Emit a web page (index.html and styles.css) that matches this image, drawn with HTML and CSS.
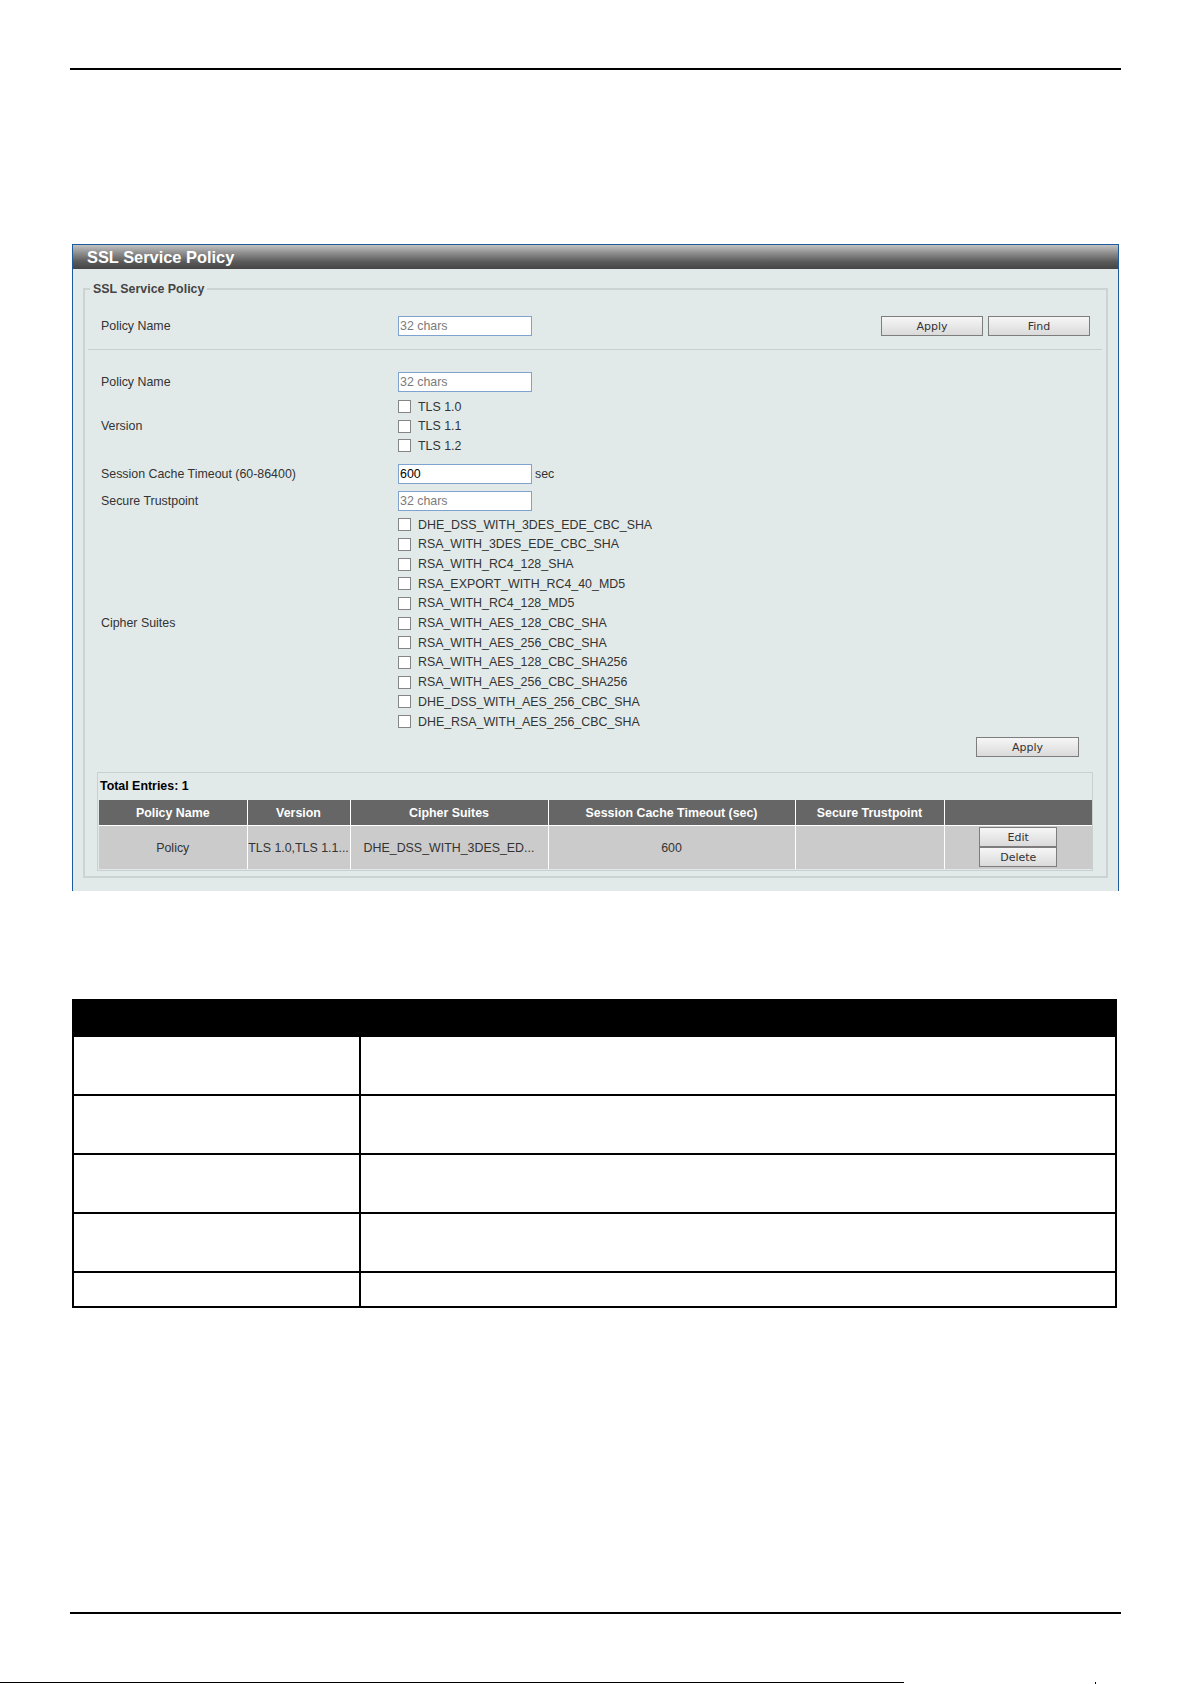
FILE: index.html
```html
<!DOCTYPE html>
<html lang="en">
<head>
    <meta charset="UTF-8">
    <meta name="viewport" content="width=device-width, initial-scale=1.0">
    <title>SSL Service Policy</title>
    <link rel="stylesheet" href="styles.css">
</head>
<body>

<div class="page">
    <div class="rule rule-top"></div>

    <div class="panel">
        <div class="panel-title">SSL Service Policy</div>
        <div class="panel-body">
            <fieldset class="group">
                <legend>SSL Service Policy</legend>

                <div class="row row-find">
                    <span class="lbl">Policy Name</span>
                    <input type="text" class="txt" placeholder="32 chars">
                    <div class="btns">
                        <button class="btn btn-wide">Apply</button>
                        <button class="btn btn-wide">Find</button>
                    </div>
                </div>

                <div class="sep"></div>

                <div class="row row-policy">
                    <span class="lbl">Policy Name</span>
                    <input type="text" class="txt" placeholder="32 chars">
                </div>

                <div class="row row-version">
                    <span class="lbl">Version</span>
                    <div class="checks">
                        <label class="chk"><span class="box"></span>TLS 1.0</label>
                        <label class="chk"><span class="box"></span>TLS 1.1</label>
                        <label class="chk"><span class="box"></span>TLS 1.2</label>
                    </div>
                </div>

                <div class="row row-session">
                    <span class="lbl">Session Cache Timeout (60-86400)</span>
                    <input type="text" class="txt" value="600">
                    <span class="unit">sec</span>
                </div>

                <div class="row row-trust">
                    <span class="lbl">Secure Trustpoint</span>
                    <input type="text" class="txt" placeholder="32 chars">
                </div>

                <div class="row row-cipher">
                    <span class="lbl">Cipher Suites</span>
                    <div class="checks">
                        <label class="chk"><span class="box"></span>DHE_DSS_WITH_3DES_EDE_CBC_SHA</label>
                        <label class="chk"><span class="box"></span>RSA_WITH_3DES_EDE_CBC_SHA</label>
                        <label class="chk"><span class="box"></span>RSA_WITH_RC4_128_SHA</label>
                        <label class="chk"><span class="box"></span>RSA_EXPORT_WITH_RC4_40_MD5</label>
                        <label class="chk"><span class="box"></span>RSA_WITH_RC4_128_MD5</label>
                        <label class="chk"><span class="box"></span>RSA_WITH_AES_128_CBC_SHA</label>
                        <label class="chk"><span class="box"></span>RSA_WITH_AES_256_CBC_SHA</label>
                        <label class="chk"><span class="box"></span>RSA_WITH_AES_128_CBC_SHA256</label>
                        <label class="chk"><span class="box"></span>RSA_WITH_AES_256_CBC_SHA256</label>
                        <label class="chk"><span class="box"></span>DHE_DSS_WITH_AES_256_CBC_SHA</label>
                        <label class="chk"><span class="box"></span>DHE_RSA_WITH_AES_256_CBC_SHA</label>
                    </div>
                </div>

                <div class="row-apply">
                    <button class="btn btn-apply">Apply</button>
                </div>

                <div class="entries">
                    <div class="total">Total Entries: 1</div>
                    <table class="list">
                        <colgroup>
                            <col style="width:148px">
                            <col style="width:103px">
                            <col style="width:198px">
                            <col style="width:247px">
                            <col style="width:149px">
                            <col style="width:148px">
                        </colgroup>
                        <tr>
                            <th>Policy Name</th>
                            <th>Version</th>
                            <th>Cipher Suites</th>
                            <th>Session Cache Timeout (sec)</th>
                            <th>Secure Trustpoint</th>
                            <th></th>
                        </tr>
                        <tr>
                            <td>Policy</td>
                            <td>TLS 1.0,TLS 1.1...</td>
                            <td>DHE_DSS_WITH_3DES_ED...</td>
                            <td>600</td>
                            <td></td>
                            <td class="actions">
                                <button class="btn btn-small">Edit</button>
                                <button class="btn btn-small">Delete</button>
                            </td>
                        </tr>
                    </table>
                </div>
            </fieldset>
        </div>
    </div>

    <table class="doc-table">
        <tr class="doc-head"><th></th><th></th></tr>
        <tr class="doc-row"><td></td><td></td></tr>
        <tr class="doc-row"><td></td><td></td></tr>
        <tr class="doc-row"><td></td><td></td></tr>
        <tr class="doc-row"><td></td><td></td></tr>
        <tr class="doc-row doc-last"><td></td><td></td></tr>
    </table>

    <div class="rule rule-bottom"></div>

    <div class="foot">
        <div class="foot-line"></div>
        <div class="foot-tick"></div>
    </div>
</div>

</body>
</html>
```

FILE: styles.css
```css
body {
    margin: 0;
    font-family: "Liberation Sans", Arial, sans-serif;
    font-size: 12.4px;
    color: #333;
    background-color: #fff;
}
.page {
    width: 1192px;
    height: 1684px;
    padding-top: 68px;
    box-sizing: border-box;
    position: relative;
}
.rule {
    height: 2px;
    background-color: #000;
    margin-left: 70px;
    width: 1051px;
}

/* web ui panel */
.panel {
    margin: 174px 0 0 72px;
    width: 1047px;
    box-sizing: border-box;
    border: 1px solid #1e5b9b;
    border-bottom: none;
}
.panel-title {
    height: 24px;
    line-height: 25px;
    padding-left: 14px;
    color: #fff;
    font-size: 16.4px;
    font-weight: bold;
    background: linear-gradient(#c2c2c2 0%, #8c8c8c 35%, #5a5a5a 70%, #454545 100%);
}
.panel-body {
    background-color: #e2eae9;
    padding: 13px 10px 13px 10px;
}
.group {
    margin: 0;
    padding: 0 0 5px 0;
    min-width: 0;
    border: 2px solid #cbd3d3;
}
.group legend {
    margin-left: 5px;
    padding: 0 3px;
    line-height: 14px;
    font-weight: bold;
    color: #444;
}

.row {
    display: flex;
    align-items: center;
    padding-left: 16px;
}
.lbl {
    width: 297px;
    flex-shrink: 0;
}
.txt {
    width: 134px;
    height: 20px;
    box-sizing: border-box;
    margin: 0;
    padding: 0 1px;
    border: 1px solid #7fa2cf;
    background-color: #fff;
    font-family: "Liberation Sans", Arial, sans-serif;
    font-size: 12.4px;
    color: #000;
}
.txt::placeholder {
    color: #7b7b7b;
}
.unit {
    margin-left: 3px;
}

.row-find {
    margin-top: 17px;
    height: 26px;
}
.btns {
    margin-left: auto;
    margin-right: 16px;
    display: flex;
    gap: 5px;
}
.btn {
    height: 20px;
    margin: 0;
    padding: 0;
    border: 1px solid #7d7d7d;
    background: linear-gradient(#f6f6f6, #dadada);
    font-family: "DejaVu Sans", Tahoma, sans-serif;
    font-size: 11px;
    color: #333;
}
.btn-wide {
    width: 102px;
}
.sep {
    margin: 10px 4px 0 3px;
    height: 1px;
    background-color: #c8d0d0;
}
.row-policy {
    margin-top: 20px;
    height: 24px;
}
.row-version {
    margin-top: 3px;
}
.row-session {
    margin-top: 6px;
    height: 24px;
}
.row-trust {
    margin-top: 3px;
    height: 24px;
}
.row-cipher {
    margin-top: 2px;
}
.checks {
    display: flex;
    flex-direction: column;
}
.row-version .chk {
    height: 19.6px;
}
.row-cipher .chk {
    height: 19.7px;
}
.chk {
    display: flex;
    align-items: center;
}
.box {
    width: 11px;
    height: 11px;
    margin-right: 7px;
    border: 1px solid #858585;
    background-color: #fff;
}

.row-apply {
    margin-top: 6px;
    display: flex;
    justify-content: flex-end;
    padding-right: 27px;
}
.btn-apply {
    width: 103px;
}

/* entries list */
.entries {
    margin: 15px 13px 0 12px;
    border: 1px solid #c8d0d0;
    padding: 0 0 1px 1px;
}
.total {
    height: 27px;
    line-height: 26px;
    padding-left: 1px;
    font-weight: bold;
    color: #000;
}
.list {
    width: 993px;
    table-layout: fixed;
    border-collapse: collapse;
}
.list th {
    height: 25px;
    padding: 0;
    background-color: #666;
    color: #fff;
    font-weight: bold;
    border-left: 1px solid #fff;
}
.list th:first-child,
.list td:first-child {
    border-left: none;
}
.list td {
    height: 42px;
    padding: 0;
    text-align: center;
    background-color: #cbcbcb;
    border-left: 1px solid #fff;
    border-top: 1px solid #fff;
    white-space: nowrap;
}
.list td.actions {
    padding-top: 1px;
    vertical-align: top;
}
.btn-small {
    display: block;
    width: 78px;
    margin: 0 auto;
}

/* parameter description table */
.doc-table {
    margin: 108px 0 0 72px;
    width: 1045px;
    border-collapse: collapse;
    table-layout: fixed;
}
.doc-table th,
.doc-table td {
    padding: 0;
    border: 2px solid #000;
}
.doc-table th:first-child,
.doc-table td:first-child {
    width: 285px;
}
.doc-head th {
    height: 34px;
    background-color: #000;
}
.doc-row td {
    height: 57px;
}
.doc-last td {
    height: 33px;
}

.rule-bottom {
    position: absolute;
    top: 1612px;
    left: 0;
}
.foot {
    position: absolute;
    left: 0;
    top: 1682px;
    width: 1192px;
    height: 2px;
}
.foot-line {
    position: absolute;
    left: 0;
    top: 0;
    width: 904px;
    height: 1px;
    background-color: #000;
}
.foot-tick {
    position: absolute;
    left: 1095px;
    top: 0;
    width: 1px;
    height: 2px;
    background-color: #000;
}
```
